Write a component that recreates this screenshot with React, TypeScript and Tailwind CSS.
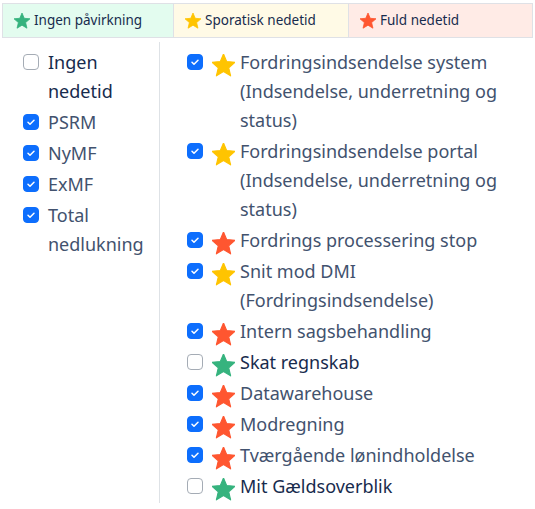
const GREEN = "#36B37E";
const YELLOW = "#FFC400";
const RED = "#FF5630";

type Item = { label: string; checked: boolean; color?: string };

const legend = [
  { label: "Ingen påvirkning", color: GREEN, bg: "bg-[#E3FCEF]", w: "w-[170px]" },
  { label: "Sporatisk nedetid", color: YELLOW, bg: "bg-[#FFFAE6]", w: "w-[175px]" },
  { label: "Fuld nedetid", color: RED, bg: "bg-[#FFEBE6]", w: "flex-1" },
];

const systems: Item[] = [
  { label: "Ingen nedetid", checked: false },
  { label: "PSRM", checked: true },
  { label: "NyMF", checked: true },
  { label: "ExMF", checked: true },
  { label: "Total nedlukning", checked: true },
];

const services: Item[] = [
  { label: "Fordringsindsendelse system (Indsendelse, underretning og status)", checked: true, color: YELLOW },
  { label: "Fordringsindsendelse portal (Indsendelse, underretning og status)", checked: true, color: YELLOW },
  { label: "Fordrings processering stop", checked: true, color: RED },
  { label: "Snit mod DMI (Fordringsindsendelse)", checked: true, color: YELLOW },
  { label: "Intern sagsbehandling", checked: true, color: RED },
  { label: "Skat regnskab", checked: false, color: GREEN },
  { label: "Datawarehouse", checked: true, color: RED },
  { label: "Modregning", checked: true, color: RED },
  { label: "Tværgående lønindholdelse", checked: true, color: RED },
  { label: "Mit Gældsoverblik", checked: false, color: GREEN },
];

function Star({ color, size }: { color: string; size: number }) {
  return (
    <svg width={size} height={size} viewBox="2 2 20 20" className="shrink-0">
      <path
        d="M12 17.27L18.18 21l-1.64-7.03L22 9.24l-7.19-.61L12 2 9.19 8.63 2 9.24l5.46 4.73L5.82 21z"
        fill={color}
        stroke={color}
        strokeWidth="1"
        strokeLinejoin="round"
      />
    </svg>
  );
}

function Checkbox({ checked }: { checked: boolean }) {
  return (
    <span
      className={`mt-[6px] flex h-4 w-4 shrink-0 items-center justify-center rounded-[4px] border ${
        checked ? "border-[#0d6efd] bg-[#0d6efd]" : "border-[#a5acb5] bg-white"
      }`}
    >
      {checked && (
        <svg width="10" height="10" viewBox="0 0 20 20">
          <path d="M4 10.5l4 4 8-8" fill="none" stroke="white" strokeWidth="3" strokeLinecap="round" strokeLinejoin="round" />
        </svg>
      )}
    </span>
  );
}

function Row({ item }: { item: Item }) {
  return (
    <label className="mb-[2px] flex items-start">
      <Checkbox checked={item.checked} />
      {item.color && (
        <span className="ml-[9px] mt-[6px]">
          <Star color={item.color} size={23} />
        </span>
      )}
      <span
        className={`${item.color ? "ml-[5px]" : "ml-[9px]"} ${
          item.checked ? "text-[#42526E]" : "text-[#172B4D]"
        }`}
      >
        {item.label}
      </span>
    </label>
  );
}

export default function App() {
  return (
    <div
      className="h-[509px] w-[535px] overflow-hidden bg-white"
      style={{ fontFamily: '"Noto Sans", "Open Sans", sans-serif' }}
    >
      <div className="ml-[2px] mr-[2px] mt-[3px] flex border border-[#dfe1e6] text-[13.5px] text-[#172B4D]">
        {legend.map((l, i) => (
          <div
            key={l.label}
            className={`flex h-[33px] items-center gap-[4px] px-[11px] ${l.bg} ${l.w} ${
              i > 0 ? "border-l border-[#dfe1e6]" : ""
            }`}
          >
            <Star color={l.color} size={16} />
            <span>{l.label}</span>
          </div>
        ))}
      </div>

      <div className="mt-[4px] flex text-[18px] leading-[29px]">
        <div className="w-[160px] shrink-0 border-r border-[#dee2e6] pl-[23px] pr-[8px] pt-[6px]">
          {systems.map((s) => (
            <Row key={s.label} item={s} />
          ))}
        </div>
        <div className="flex-1 pl-[27px] pr-[4px] pt-[6px]">
          {services.map((s) => (
            <Row key={s.label} item={s} />
          ))}
        </div>
      </div>
    </div>
  );
}
